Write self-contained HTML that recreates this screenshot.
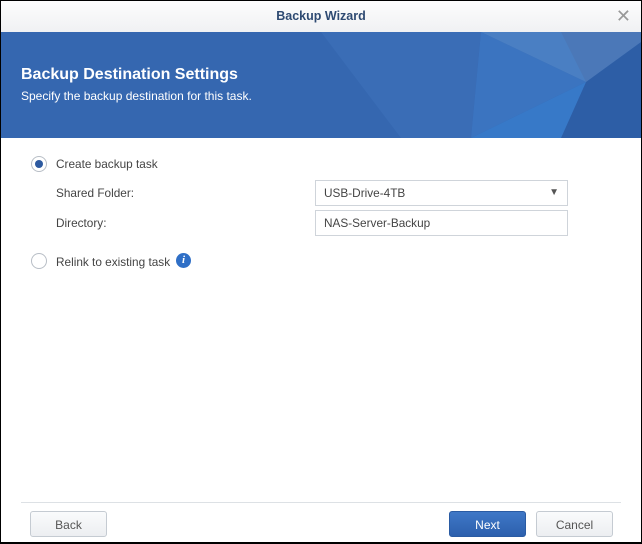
<!DOCTYPE html>
<html><head><style>
body{margin:0;width:642px;height:544px;overflow:hidden;font-family:"Liberation Sans",sans-serif;background:#000}
.win{position:absolute;left:1px;top:1px;width:640px;height:541px;background:#fff;overflow:hidden}
.title{position:absolute;left:0;top:0;width:640px;height:31px;background:linear-gradient(#fdfdfd,#f0f1f3);text-align:center;line-height:31px;font-size:12.5px;font-weight:bold;color:#2e4a72}
.x{position:absolute;right:10px;top:0;font-size:18px;color:#999;font-weight:normal}
.banner{position:absolute;left:0;top:31px;width:640px;height:106px;background:#3567b0;overflow:hidden}
.banner h1{position:absolute;left:20px;top:34px;margin:0;font-size:16px;color:#fff}
.banner p{position:absolute;left:20px;top:57px;margin:0;font-size:12px;color:#fff}
.lbl{position:absolute;font-size:11.8px;color:#444}
.radio{position:absolute;width:14px;height:14px;border:1px solid #b8bec6;border-radius:50%;background:#fff}
.radio.on::after{content:"";position:absolute;left:3px;top:3px;width:8px;height:8px;border-radius:50%;background:#2d5aa0}
.inp{position:absolute;left:314px;width:253px;height:26px;border:1px solid #cfd4da;font-size:11.8px;color:#444;line-height:24px;padding-left:8px;box-sizing:border-box}
.btn{position:absolute;top:510px;height:26px;border:1px solid #c5cbd2;border-radius:3px;background:linear-gradient(#fafbfc,#eceef1);font-size:12px;color:#555;text-align:center;line-height:26px;box-sizing:border-box}
</style></head><body><div class="win">
<div class="title">Backup Wizard<span class="x">✕</span></div>
<div class="banner">
<svg width="640" height="106" style="position:absolute;left:0;top:0">
<polygon points="320,0 480,0 470,106 400,106" fill="#3a6db6"/>
<polygon points="480,0 585,50 470,106" fill="#3b74c0"/>
<polygon points="480,0 585,0 585,50" fill="#4a7fc3"/>
<polygon points="585,50 640,10 640,106 560,106" fill="#2d5ea6"/>
<polygon points="585,50 470,106 560,106" fill="#3779c8"/>
<polygon points="560,0 640,0 640,10 585,50" fill="#4b78b8"/>
</svg>
<h1>Backup Destination Settings</h1><p>Specify the backup destination for this task.</p></div>
<div class="radio on" style="left:30px;top:155px"></div><div class="lbl" style="left:55px;top:156px">Create backup task</div>
<div class="lbl" style="left:55px;top:185px">Shared Folder:</div>
<div class="inp" style="top:179px">USB-Drive-4TB<span style="position:absolute;right:8px;top:0;font-size:10px;color:#555">▼</span></div>
<div class="lbl" style="left:55px;top:215px">Directory:</div>
<div class="inp" style="top:209px">NAS-Server-Backup</div>
<div class="radio" style="left:30px;top:252px"></div><div class="lbl" style="left:55px;top:254px">Relink to existing task</div>
<div style="position:absolute;left:175px;top:252px;width:15px;height:15px;border-radius:50%;background:#2f6fc6;color:#fff;font:italic bold 11px 'Liberation Serif',serif;text-align:center;line-height:15px">i</div>
<div style="position:absolute;left:20px;top:501px;width:600px;height:1px;background:#dde1e5"></div>
<div class="btn" style="left:29px;width:77px">Back</div>
<div class="btn" style="left:448px;width:77px;background:linear-gradient(#3f78c7,#2c60ad);border-color:#2a5ba3;color:#fff">Next</div>
<div class="btn" style="left:535px;width:77px">Cancel</div>
</div></body></html>
